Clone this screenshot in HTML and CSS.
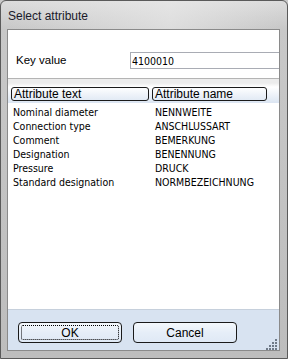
FILE: index.html
```
<!DOCTYPE html>
<html lang="en">

<head>
    <meta charset="UTF-8">
    <title>Select attribute</title>
    <link rel="stylesheet" href="styles.css">
</head>

<body>

    <div class="window">
        <div class="titlebar">Select attribute</div>

        <div class="client">
            <div class="panel">
                <div class="key-row">
                    <label for="keyValue">Key value</label>
                    <input type="text" id="keyValue" value="4100010">
                </div>

                <div class="list">
                    <div class="list-head">
                        <div class="head-cell head-text">Attribute text</div>
                        <div class="head-cell head-name">Attribute name</div>
                    </div>

                    <div class="row"><span class="col-text">Nominal diameter</span><span class="col-name">NENNWEITE</span></div>
                    <div class="row"><span class="col-text">Connection type</span><span class="col-name">ANSCHLUSSART</span></div>
                    <div class="row"><span class="col-text">Comment</span><span class="col-name">BEMERKUNG</span></div>
                    <div class="row"><span class="col-text">Designation</span><span class="col-name">BENENNUNG</span></div>
                    <div class="row"><span class="col-text">Pressure</span><span class="col-name">DRUCK</span></div>
                    <div class="row"><span class="col-text">Standard designation</span><span class="col-name">NORMBEZEICHNUNG</span></div>
                </div>
            </div>

            <div class="footer">
                <button type="button" class="btn btn-ok"><span class="focus">OK</span></button>
                <button type="button" class="btn">Cancel</button>
                <div class="grip">
                    <svg width="12" height="12" viewBox="0 0 12 12">
                        <g fill="#6f7a88">
                            <rect x="9" y="0" width="2" height="2" />
                            <rect x="6" y="3" width="2" height="2" />
                            <rect x="9" y="3" width="2" height="2" />
                            <rect x="3" y="6" width="2" height="2" />
                            <rect x="6" y="6" width="2" height="2" />
                            <rect x="9" y="6" width="2" height="2" />
                            <rect x="0" y="9" width="2" height="2" />
                            <rect x="3" y="9" width="2" height="2" />
                            <rect x="6" y="9" width="2" height="2" />
                            <rect x="9" y="9" width="2" height="2" />
                        </g>
                    </svg>
                </div>
            </div>
        </div>
    </div>

</body>

</html>
```

FILE: styles.css
```
body {
    margin: 0;
    font-family: "Liberation Sans", sans-serif;
    background-color: #c9c9c9;
}

.window {
    width: 288px;
    height: 359px;
    box-sizing: border-box;
    border: 1px solid #5a5a5a;
    border-radius: 6px 6px 0 0;
    background: linear-gradient(to bottom, #dcdcdc 0px, #c8c8c8 28px, #bdbdbd 100%);
    display: flex;
    flex-direction: column;
    padding: 0 7px 7px 6px;
}

.titlebar {
    height: 28px;
    line-height: 30px;
    padding-left: 1px;
    font-size: 12px;
    color: #1a1a2a;
    background: linear-gradient(to right, transparent 0%, rgba(235, 235, 235, 0.6) 60%, transparent 100%);
}

.client {
    flex: 1;
    display: flex;
    flex-direction: column;
    border: 1px solid #8a8a8a;
    background-color: #fff;
    position: relative;
}

.panel {
    flex: 1;
    display: flex;
    flex-direction: column;
}

.key-row {
    height: 48px;
    box-sizing: border-box;
    padding-top: 22px;
    display: flex;
    align-items: flex-start;
}

.key-row label {
    width: 114px;
    padding-left: 8px;
    font-size: 11.5px;
    line-height: 17px;
    color: #000;
}

.key-row input {
    flex: 1;
    height: 17px;
    box-sizing: border-box;
    margin: 0;
    padding: 0 0 0 1px;
    border: 1px solid #a9acb4;
    border-right: none;
    font-family: "DejaVu Sans Condensed", "Liberation Sans", sans-serif;
    font-size: 10.5px;
    color: #000;
    outline: none;
}

.list {
    flex: 1;
    border-top: 1px solid #b4b4b4;
    background-color: #fff;
}

.list-head {
    height: 24px;
    box-sizing: border-box;
    padding: 8px 0 0 3px;
    display: flex;
    gap: 3px;
    background: linear-gradient(to bottom, #ececec 0px, #ececec 4px, #ffffff 8px, #dbe5f2 24px);
}

.head-cell {
    height: 14px;
    box-sizing: border-box;
    border: 1px solid #1a1a1a;
    border-radius: 3px;
    padding-left: 2px;
    font-size: 12px;
    line-height: 12px;
    color: #000;
}

.head-text {
    width: 138px;
}

.head-name {
    width: 115px;
}

.row {
    height: 14px;
    display: flex;
    font-family: "DejaVu Sans Condensed", "Liberation Sans", sans-serif;
    font-size: 10.5px;
    line-height: 14px;
    color: #000;
}

.list-head + .row {
    margin-top: 2px;
}

.col-text {
    width: 142px;
    padding-left: 5px;
}

.col-name {
    flex: 1;
}

.footer {
    height: 41px;
    box-sizing: border-box;
    border-top: 1px solid #c6d0dc;
    background-color: #d8e3f1;
    display: flex;
    align-items: flex-start;
    padding: 12px 0 0 10px;
    gap: 11px;
    position: relative;
}

.btn {
    width: 104px;
    height: 21px;
    margin: 0;
    padding: 0;
    border: 1px solid #1a1a1a;
    border-radius: 4px;
    background: linear-gradient(to bottom, #f4f8fc 0%, #e6eef8 50%, #dfe9f5 100%);
    font-family: "Liberation Sans", sans-serif;
    font-size: 12px;
    color: #000;
}

.btn-ok {
    padding: 2px;
}

.btn-ok .focus {
    display: flex;
    align-items: center;
    justify-content: center;
    height: 100%;
    border: 1px dotted #000;
    border-radius: 2px;
    box-sizing: border-box;
}

.grip {
    position: absolute;
    right: 1px;
    bottom: 1px;
    width: 12px;
    height: 12px;
}
```
